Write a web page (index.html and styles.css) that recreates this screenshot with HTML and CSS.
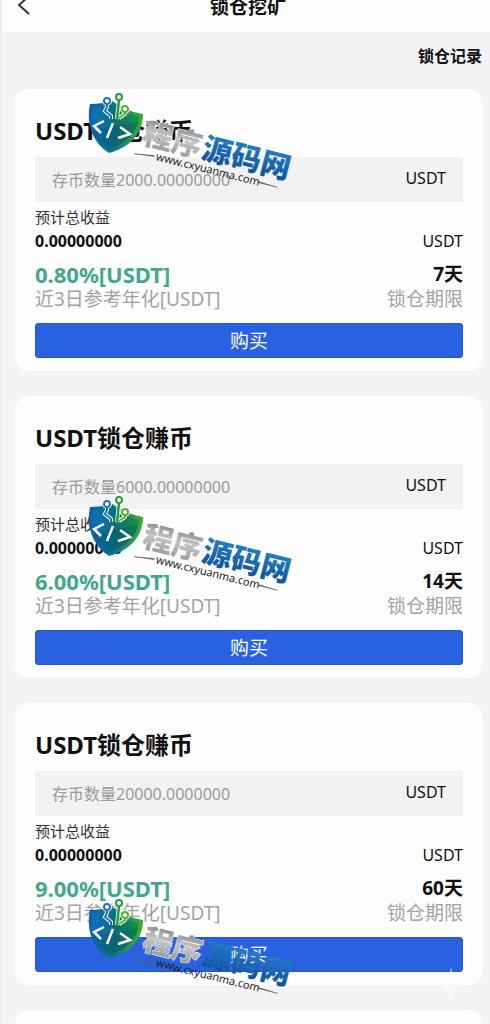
FILE: index.html
```html
<!DOCTYPE html>
<html lang="zh-CN">
<head>
    <meta charset="UTF-8">
    <meta name="viewport" content="width=device-width, initial-scale=1.0">
    <title>锁仓挖矿</title>
    <link rel="stylesheet" href="styles.css">
</head>
<body>

    <header class="header">
        <button type="button" class="back" aria-label="返回">
            <svg width="14" height="20" viewBox="0 0 14 20"><path d="M12 2 L3 10 L13 19" fill="none" stroke="#333" stroke-width="2"/></svg>
        </button>
        <h1>锁仓挖矿</h1>
    </header>

    <div class="toolbar">
        <a href="#">锁仓记录</a>
    </div>

    <main class="list">
        <section class="card">
            <h2>USDT锁仓赚币</h2>
            <label class="amount">
                <input type="text" placeholder="存币数量2000.00000000">
                <span>USDT</span>
            </label>
            <p class="label">预计总收益</p>
            <div class="row profit"><b>0.00000000</b><span>USDT</span></div>
            <div class="row rate"><b class="green">0.80%[USDT]</b><b>7天</b></div>
            <div class="row note"><span>近3日参考年化[USDT]</span><span>锁仓期限</span></div>
            <button type="button" class="buy">购买</button>
        </section>

        <section class="card">
            <h2>USDT锁仓赚币</h2>
            <label class="amount">
                <input type="text" placeholder="存币数量6000.00000000">
                <span>USDT</span>
            </label>
            <p class="label">预计总收益</p>
            <div class="row profit"><b>0.00000000</b><span>USDT</span></div>
            <div class="row rate"><b class="green">6.00%[USDT]</b><b>14天</b></div>
            <div class="row note"><span>近3日参考年化[USDT]</span><span>锁仓期限</span></div>
            <button type="button" class="buy">购买</button>
        </section>

        <section class="card">
            <h2>USDT锁仓赚币</h2>
            <label class="amount">
                <input type="text" placeholder="存币数量20000.0000000">
                <span>USDT</span>
            </label>
            <p class="label">预计总收益</p>
            <div class="row profit"><b>0.00000000</b><span>USDT</span></div>
            <div class="row rate"><b class="green">9.00%[USDT]</b><b>60天</b></div>
            <div class="row note"><span>近3日参考年化[USDT]</span><span>锁仓期限</span></div>
            <button type="button" class="buy">购买</button>
        </section>

        <section class="card next"></section>
    </main>

    <!-- watermark, drawn once and reused -->
    <svg class="defs" width="0" height="0" aria-hidden="true">
        <defs>
            <linearGradient id="shield" x1="0" y1="0" x2="1" y2="0">
                <stop offset="0" stop-color="#0b62b0"/>
                <stop offset="0.45" stop-color="#0f7391"/>
                <stop offset="1" stop-color="#3fae2e"/>
            </linearGradient>
            <linearGradient id="inner" x1="0" y1="0" x2="1" y2="0">
                <stop offset="0" stop-color="#0f6fc0"/>
                <stop offset="0.5" stop-color="#0a7078"/>
                <stop offset="1" stop-color="#17943c"/>
            </linearGradient>
            <linearGradient id="silver" x1="0" y1="0" x2="0" y2="1">
                <stop offset="0.2" stop-color="#8a8a8a"/>
                <stop offset="0.5" stop-color="#c6c6c6"/>
                <stop offset="1" stop-color="#8c8c8c"/>
            </linearGradient>
            <linearGradient id="blue" x1="0" y1="0" x2="0" y2="1">
                <stop offset="0.2" stop-color="#2380c4"/>
                <stop offset="1" stop-color="#0a4a96"/>
            </linearGradient>
            <g id="mark">
                <path d="M8 12 C16 12 22 11 29 8 C38 15 48 20 61 22 C61 42 47 56 27 61 C10 50 4 31 8 12Z" fill="url(#shield)"/>
                <path d="M11 15 C18 16 24 15 30 12 C38 18 46 23 57 25 C56 40 44 51 28 57 C14 47 8 32 11 15Z" fill="url(#inner)"/>
                <path d="M11 38 L56 30 C54 42 43 52 28 57 C20 52 14 46 11 38Z" fill="#0a4f6b" opacity="0.35"/>
                <g fill="none" stroke="#fff" stroke-width="4">
                    <path d="M25 12 V15 L23 19 L29 24 V27 M37 8 L35 27 M43 20 V22 L37 26"/>
                    <circle cx="25" cy="9" r="3"/><circle cx="37" cy="5" r="3"/><circle cx="43" cy="17" r="3"/>
                </g>
                <g fill="none" stroke-width="2">
                    <path d="M25 12 V15 L23 19 L29 24 V27" stroke="#1676bd"/>
                    <circle cx="25" cy="9" r="3" stroke="#1676bd" fill="#fff"/>
                    <path d="M37 8 L35 28" stroke="#239b3b" stroke-width="2.5"/>
                    <circle cx="37" cy="5" r="3" stroke="#239b3b" fill="#fff"/>
                    <path d="M43 20 V22 L37 26" stroke="#4cb531"/>
                    <circle cx="43" cy="17" r="3" stroke="#4cb531" fill="#fff"/>
                </g>
                <path d="M22 29 L12 34 L19 41 M31 31 L25 46 M38 35 L48 42 L36 46" fill="none" stroke="#fff" stroke-width="2.5"/>
                <g transform="translate(59 51) rotate(14)">
                    <text class="mark-name silver" x="0" y="0" fill="url(#silver)">程序</text>
                    <text class="mark-name" x="61" y="0" fill="url(#blue)">源码网</text>
                    <text class="mark-url" x="18" y="13">www.cxyuanma.com</text>
                    <path d="M-4 12 L16 9 L16 10Z M123 9 L143 10 L123 10Z" fill="#444" stroke="#666" stroke-width="0.5"/>
                </g>
            </g>
        </defs>
    </svg>
    <svg class="watermark first" width="220" height="110" aria-hidden="true"><use href="#mark"/></svg>
    <svg class="watermark second" width="220" height="110" aria-hidden="true"><use href="#mark"/></svg>
    <svg class="watermark third" width="220" height="110" aria-hidden="true"><use href="#mark"/></svg>
    <svg class="sparkle" width="28" height="36" viewBox="0 0 28 36" aria-hidden="true"><path d="M14 0 Q16 16 28 18 Q16 20 14 36 Q12 20 0 18 Q12 16 14 0Z" fill="#fff"/></svg>

</body>
</html>
```
FILE: styles.css
```css
* {
    box-sizing: border-box;
}
body {
    position: relative;
    margin: 0;
    height: 100vh;
    overflow: hidden;
    border-left: 2px solid #ececee;
    background-color: #f4f4f6;
    color: #111;
    font-family: "Noto Sans", "Noto Sans CJK SC", sans-serif;
    font-size: 16px;
}
h1, h2, p {
    margin: 0;
}
button, input {
    font-family: inherit;
    border: none;
    padding: 0;
}
.header {
    display: grid;
    grid-template-columns: 44px 1fr 40px;
    height: 32px;
    background: #fefefe;
}
.header h1 {
    margin-top: -7px;
    text-align: center;
    font-size: 19px;
    line-height: 28px;
}
.back {
    display: flex;
    align-items: flex-start;
    padding-left: 14px;
    margin-top: -5px;
    background: none;
}
.toolbar {
    display: flex;
    justify-content: flex-end;
    align-items: center;
    height: 57px;
    padding: 0 8px 10px 0;
}
.toolbar a {
    color: #111;
    font-size: 16px;
    font-weight: bold;
    line-height: 24px;
    text-decoration: none;
}
.list {
    display: flex;
    flex-direction: column;
    gap: 25px;
    padding: 0 8px 0 13px;
}
.card {
    padding: 24px 19px 13px 20px;
    border-radius: 14px;
    background: #fefefe;
}
.card.next {
    height: 60px;
}
.card h2 {
    font-size: 24px;
    line-height: 36px;
}
.amount {
    display: flex;
    align-items: center;
    height: 45px;
    margin-top: 8px;
    padding: 0 17px;
    background: #f2f2f3;
}
.amount input {
    flex: 1;
    min-width: 0;
    height: 45px;
    background: none;
    font-size: 16px;
}
.amount input::placeholder {
    color: #999;
}
.amount span {
    line-height: 24px;
    padding-bottom: 4px;
}
.label {
    margin-top: 3px;
    color: #333;
    font-size: 15px;
    line-height: 24px;
}
.row {
    display: flex;
    justify-content: space-between;
    line-height: 24px;
}
.rate {
    margin-top: 9px;
    font-size: 19px;
}
.green {
    color: #42a88c;
    font-size: 22px;
}
.note {
    margin-top: 1px;
    color: #a3a3a3;
    font-size: 19px;
}
.buy {
    display: block;
    width: 100%;
    height: 35px;
    margin-top: 12px;
    border: 1px solid #2855b8;
    border-radius: 3px;
    background: #2a61e0;
    color: #fff;
    font-size: 19px;
    line-height: 24px;
}
.defs {
    position: absolute;
}
.watermark {
    position: absolute;
    left: 80px;
    overflow: visible;
}
.first {
    top: 92px;
}
.second {
    top: 495px;
}
.third {
    top: 898px;
}
.mark-name {
    font-family: "Noto Sans CJK SC", sans-serif;
    font-size: 30px;
    font-weight: 900;
}
.silver {
    stroke: #fff;
    stroke-width: 1px;
    paint-order: stroke;
}
.mark-url {
    fill: #222;
    font-size: 11px;
}
.sparkle {
    position: absolute;
    right: 25px;
    top: 966px;
    opacity: 0.5;
}
```
